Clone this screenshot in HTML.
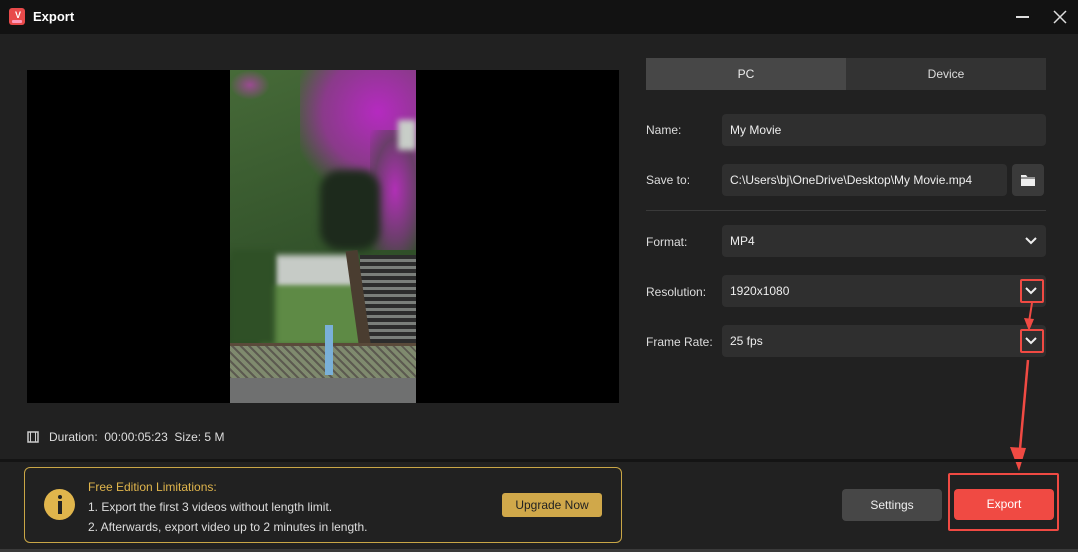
<!DOCTYPE html>
<html><head><meta charset="utf-8"><style>
*{margin:0;padding:0;box-sizing:border-box}
body{width:1078px;height:552px;background:#212121;font-family:"Liberation Sans",sans-serif;color:#ddd;font-size:12px;position:relative;overflow:hidden}
.a{position:absolute}
.field{position:absolute;background:#2f2f2f;border-radius:4px;height:32px;line-height:32px;padding-left:8px;color:#eee}
.lbl{position:absolute;left:646px;color:#ddd}
</style></head><body>
<div class="a" style="left:0;top:0;width:1078px;height:34px;background:#121212"></div>
<div class="a" style="left:9px;top:8px;width:16px;height:17px;background:#e84a4a;border-radius:3px"></div>
<div class="a" style="left:12px;top:20px;width:10px;height:3px;background:#f9b;border-radius:1px"></div>
<div class="a" style="left:15px;top:10px;color:#fff;font-size:9px;font-weight:bold">V</div>
<div class="a" style="left:33px;top:9px;color:#fff;font-weight:bold;font-size:13px">Export</div>
<div class="a" style="left:1016px;top:16px;width:13px;height:1.5px;background:#ddd"></div>
<svg class="a" style="left:1053px;top:10px" width="14" height="14"><path d="M1 1L13 13M13 1L1 13" stroke="#ddd" stroke-width="1.5"/></svg>

<div class="a" style="left:27px;top:70px;width:592px;height:333px;background:#000"></div>
<div class="a" style="left:230px;top:70px;width:186px;height:333px;overflow:hidden;background:#2e4a25">
 <div class="a" style="left:0;top:0;width:186px;height:190px;background:linear-gradient(160deg,#466a38,#2f4e28)"></div>
 <div class="a" style="left:70px;top:-10px;width:130px;height:130px;background:radial-gradient(ellipse at 60% 40%,#b52ac0 0%,#8a3a8a 50%,rgba(62,92,50,0) 80%)"></div>
 <div class="a" style="left:140px;top:60px;width:50px;height:120px;background:radial-gradient(ellipse,#b030b5 0%,#6a3e6a 60%,rgba(0,0,0,0) 100%)"></div>
 <div class="a" style="left:0;top:0;width:40px;height:30px;background:radial-gradient(ellipse,#9a4b90,rgba(0,0,0,0) 70%)"></div>
 <div class="a" style="left:168px;top:50px;width:18px;height:30px;background:#c8cec8;filter:blur(3px)"></div>
 <div class="a" style="left:90px;top:100px;width:60px;height:80px;background:#1d2a1c;border-radius:20px;filter:blur(4px)"></div>
 <div class="a" style="left:45px;top:185px;width:80px;height:40px;background:#c6cbc6;filter:blur(3px)"></div>
 <div class="a" style="left:30px;top:215px;width:120px;height:60px;background:#5e8a45;filter:blur(2px)"></div>
 <div class="a" style="left:0;top:180px;width:45px;height:95px;background:#2f5026;filter:blur(3px)"></div>
 <div class="a" style="left:130px;top:185px;width:56px;height:90px;background:repeating-linear-gradient(180deg,#2c2c2c 0 4px,#7a7e7a 4px 7px)"></div>
 <div class="a" style="left:125px;top:180px;width:12px;height:136px;background:#4a3d30;transform:rotate(-8deg)"></div>
 <div class="a" style="left:0;top:273px;width:186px;height:36px;background:repeating-linear-gradient(45deg,#5c5a50 0 2px,#7f8a6e 2px 6px)"></div>
 <div class="a" style="left:0;top:273px;width:186px;height:3px;background:#5a4a3a"></div>
 <div class="a" style="left:95px;top:255px;width:8px;height:50px;background:#7ab0d8"></div>
 <div class="a" style="left:0;top:308px;width:186px;height:25px;background:#6f7070"></div>
</div>

<svg class="a" style="left:27px;top:431px" width="12" height="12"><rect x="1" y="1" width="10" height="10" fill="none" stroke="#ccc" stroke-width="1.5"/><path d="M3.5 1v10M8.5 1v10" stroke="#ccc"/></svg>
<div class="a" style="left:49px;top:430px;color:#ddd">Duration:&nbsp; 00:00:05:23&nbsp; Size: 5 M</div>

<div class="a" style="left:646px;top:58px;width:200px;height:32px;background:#474747;color:#eee;text-align:center;line-height:32px">PC</div>
<div class="a" style="left:846px;top:58px;width:200px;height:32px;background:#333;color:#ddd;text-align:center;line-height:32px">Device</div>

<div class="lbl" style="top:123px">Name:</div>
<div class="field" style="left:722px;top:114px;width:324px">My Movie</div>
<div class="lbl" style="top:173px">Save to:</div>
<div class="field" style="left:722px;top:164px;width:285px">C:\Users\bj\OneDrive\Desktop\My Movie.mp4</div>
<div class="a" style="left:1012px;top:164px;width:32px;height:32px;background:#3a3a3a;border-radius:4px"></div>
<svg class="a" style="left:1020px;top:173px" width="16" height="14"><path d="M1 2h5l1.5 2H15v9H1z" fill="#eee"/><path d="M1 5h14" stroke="#3a3a3a"/></svg>
<div class="a" style="left:646px;top:210px;width:400px;height:1px;background:#3a3a3a"></div>

<div class="lbl" style="top:235px">Format:</div>
<div class="field" style="left:722px;top:225px;width:324px">MP4</div>
<div class="lbl" style="top:285px">Resolution:</div>
<div class="field" style="left:722px;top:275px;width:324px">1920x1080</div>
<div class="lbl" style="top:335px">Frame Rate:</div>
<div class="field" style="left:722px;top:325px;width:324px">25 fps</div>
<svg class="a" style="left:1024px;top:235px" width="14" height="12"><path d="M2 3l5 5 5-5" fill="none" stroke="#eee" stroke-width="2"/></svg>
<svg class="a" style="left:1024px;top:285px" width="14" height="12"><path d="M2 3l5 5 5-5" fill="none" stroke="#eee" stroke-width="2"/></svg>
<svg class="a" style="left:1024px;top:335px" width="14" height="12"><path d="M2 3l5 5 5-5" fill="none" stroke="#eee" stroke-width="2"/></svg>
<div class="a" style="left:1020px;top:279px;width:24px;height:24px;border:2px solid #f04a43;border-radius:2px"></div>
<div class="a" style="left:1020px;top:329px;width:24px;height:24px;border:2px solid #f04a43;border-radius:2px"></div>
<svg class="a" style="left:940px;top:300px" width="138" height="180"><path d="M92 3L89 22" stroke="#f04a43" stroke-width="2"/><path d="M84 18l5 13 5-12z" fill="#f04a43"/><path d="M88 60L79 160" stroke="#f04a43" stroke-width="2.5"/><path d="M70 147l9 24 7-23z" fill="#f04a43"/></svg>

<div class="a" style="left:0;top:459px;width:1078px;height:3px;background:#141414"></div>
<div class="a" style="left:0;top:549px;width:1078px;height:3px;background:#3a3a3a"></div>

<div class="a" style="left:24px;top:467px;width:598px;height:76px;border:1px solid #c9a646;border-radius:6px"></div>
<div class="a" style="left:44px;top:489px;width:31px;height:31px;background:#e0b54c;border-radius:50%"></div>
<div class="a" style="left:57.5px;top:495px;width:4px;height:4px;background:#222;border-radius:50%"></div>
<div class="a" style="left:57.5px;top:501px;width:4px;height:13px;background:#222"></div>
<div class="a" style="left:88px;top:480px;color:#e0b54c">Free Edition Limitations:</div>
<div class="a" style="left:88px;top:500px;color:#ddd">1. Export the first 3 videos without length limit.</div>
<div class="a" style="left:88px;top:520px;color:#ddd">2. Afterwards, export video up to 2 minutes in length.</div>
<div class="a" style="left:502px;top:493px;width:100px;height:24px;background:#d0a84a;border-radius:3px;color:#222;text-align:center;line-height:24px">Upgrade Now</div>

<div class="a" style="left:842px;top:489px;width:100px;height:32px;background:#474747;border-radius:4px;color:#eee;text-align:center;line-height:32px">Settings</div>
<div class="a" style="left:948px;top:473px;width:111px;height:58px;border:2px solid #f04a43;border-radius:2px"></div>
<div class="a" style="left:954px;top:489px;width:100px;height:31px;background:#f04a43;border-radius:4px;color:#fff;text-align:center;line-height:31px">Export</div>
</body></html>
